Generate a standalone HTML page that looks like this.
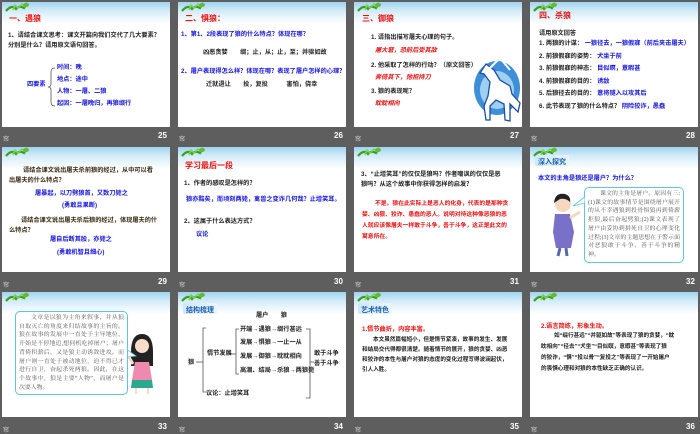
<!DOCTYPE html>
<html><head><meta charset="utf-8">
<style>
*{margin:0;padding:0;box-sizing:border-box}
body{width:700px;height:433px;background:#5e5e5e;position:relative;overflow:hidden;font-family:"Liberation Sans","Noto Sans CJK SC",sans-serif;}
.s{position:absolute;width:168px;height:125px;background:linear-gradient(#9fd3f0 0px,#d4ecf8 9px,#fff 22px,#fff 100%);}
.t{position:absolute;white-space:nowrap;font-size:6.2px;font-weight:bold;color:#222;line-height:1}
.r{color:#f01010}.b{color:#1515e0}.br{color:#3a2a10}
.h{font-size:8px;color:#f01010;font-weight:bold}
.f{position:absolute;color:#fff;font-size:8px;font-weight:bold}
.fi{position:absolute;color:#ddd;font-size:6px}
.tag{position:absolute;width:34px;height:11px;background:linear-gradient(90deg,#cfe7f7,#eaf5fc);border-radius:2px;color:#1a5fb0;font-size:7px;font-weight:bold;padding:2px 0 0 3px;white-space:nowrap}
.box{position:absolute;border:1px solid #5cc6e6;border-radius:5px;background:#fff;font-family:"Liberation Serif","Noto Serif CJK SC",serif;color:#555;font-size:5.9px;line-height:8.7px;padding:2px 3px;text-align:justify;overflow:hidden}
.sm{font-size:5.6px}
</style></head><body>

<div class="s" style="left:2px;top:2px"></div>
<div class="s" style="left:178px;top:2px"></div>
<div class="s" style="left:354px;top:2px"></div>
<div class="s" style="left:530px;top:2px"></div>
<div class="s" style="left:2px;top:147px"></div>
<div class="s" style="left:178px;top:147px"></div>
<div class="s" style="left:354px;top:147px"></div>
<div class="s" style="left:530px;top:147px"></div>
<div class="s" style="left:2px;top:292px"></div>
<div class="s" style="left:178px;top:292px"></div>
<div class="s" style="left:354px;top:292px"></div>
<div class="s" style="left:530px;top:292px"></div>

<svg width="700" height="433" style="position:absolute;left:0;top:0">
<defs><g id="v"><path d="M2 9 Q8 2 12 7 Q15 3 20 6 L23 1" stroke="#3aa020" stroke-width="2.2" fill="none"/><path d="M9 8 L11 3 L14 6 L18 2 L21 5" stroke="#7ed050" stroke-width="1.5" fill="none"/><ellipse cx="22" cy="3" rx="3" ry="2" fill="#5ebd2c"/></g></defs>
<use href="#v" x="4" y="2"/><use href="#v" x="180" y="2"/><use href="#v" x="356" y="2"/><use href="#v" x="532" y="2"/>
<use href="#v" x="4" y="147"/><use href="#v" x="180" y="147"/><use href="#v" x="356" y="147"/><use href="#v" x="532" y="147"/>
<use href="#v" x="4" y="292"/><use href="#v" x="180" y="292"/><use href="#v" x="356" y="292"/><use href="#v" x="532" y="292"/>
<path d="M55 68 Q51 68 51 72 L51 84 Q51 87 48 87 Q51 87 51 90 L51 102 Q51 106 55 106" stroke="#555" fill="none" stroke-width="0.8"/>
<ellipse cx="497" cy="88" rx="23" ry="27" fill="#3f8fd8"/>
<ellipse cx="497" cy="90" rx="17" ry="19" fill="#9fd0f2"/>
<path d="M486 64 L480 73 L484 74 L490 82 L488 96 L484 106 L486 120 L490 120 L490 106 L496 100 L504 104 L505 120 L510 121 L510 104 L518 112 L520 103 L512 94 L510 86 L500 80 L494 70 Z" fill="#fff" stroke="#1a4fa8" stroke-width="1.3"/>
<path d="M490 68 L500 58 L510 70" stroke="#fff" stroke-width="2" fill="none"/>
<circle cx="563" cy="204" r="8" fill="#f6d8c0"/>
<path d="M554 203 Q555 192 565 194 Q571 196 570 202 Q566 198 560 199 Z" fill="#222"/>
<path d="M555 214 L570 214 L574 232 L571 248 L556 248 L553 232 Z" fill="#7b70c8"/>
<path d="M560 248 L558 256 M566 248 L567 256" stroke="#5668b0" stroke-width="3"/>
<path d="M570 218 L580 212" stroke="#f6d8c0" stroke-width="3"/>
<path d="M131 352 Q131 334 142 334 Q153 334 153 352 L153 366 L131 366 Z" fill="#222"/>
<circle cx="142" cy="346" r="7" fill="#f8dcc8"/>
<path d="M135 362 L149 362 L152 380 L132 380 Z" fill="#ee8ab0"/>
<path d="M132 380 L152 380 L153 388 L131 388 Z" fill="#2aa890"/>
<path d="M136 388 L136 394 M148 388 L148 394" stroke="#f8dcc8" stroke-width="2"/>
<path d="M133 364 L126 352" stroke="#f8dcc8" stroke-width="3"/>
<g stroke="#555" fill="none" stroke-width="0.8">
<path d="M206 328 L203 328 L203 392 L206 392"/>
<path d="M196 362 L203 362"/>
<path d="M229 354 L236 354"/>
<path d="M239 329 L236 329 L236 374 L239 374"/>
<path d="M306 329 L310 329 L310 398 L306 398"/>
<path d="M310 362 L314 362"/>
</g>
</svg>

<div class="fi" style="left:3px;top:134px">帘</div><div class="f" style="left:158px;top:131px">25</div>
<div class="fi" style="left:179px;top:134px">帘</div><div class="f" style="left:334px;top:131px">26</div>
<div class="fi" style="left:355px;top:134px">帘</div><div class="f" style="left:510px;top:131px">27</div>
<div class="fi" style="left:531px;top:134px">帘</div><div class="f" style="left:686px;top:131px">28</div>
<div class="fi" style="left:3px;top:280px">帘</div><div class="f" style="left:158px;top:277px">29</div>
<div class="fi" style="left:179px;top:280px">帘</div><div class="f" style="left:334px;top:277px">30</div>
<div class="fi" style="left:355px;top:280px">帘</div><div class="f" style="left:510px;top:277px">31</div>
<div class="fi" style="left:531px;top:280px">帘</div><div class="f" style="left:686px;top:277px">32</div>
<div class="fi" style="left:3px;top:425px">帘</div><div class="f" style="left:158px;top:422px">33</div>
<div class="fi" style="left:179px;top:425px">帘</div><div class="f" style="left:334px;top:422px">34</div>
<div class="fi" style="left:355px;top:425px">帘</div><div class="f" style="left:510px;top:422px">35</div>
<div class="fi" style="left:531px;top:425px">帘</div><div class="f" style="left:686px;top:422px">36</div>

<div class="t h" style="left:9px;top:15px">一、遇狼</div>
<div class="t" style="left:8px;top:33px">1、请结合课文思考：课文开篇向我们交代了几大要素？</div>
<div class="t" style="left:8px;top:43px">分别是什么？请用原文语句回答。</div>
<div class="t b" style="left:27px;top:82px">四要素</div>
<div class="t b" style="left:57px;top:65px">时间：晚</div>
<div class="t b" style="left:57px;top:77px">地点：途中</div>
<div class="t b" style="left:57px;top:89px">人物：一屠、二狼</div>
<div class="t b" style="left:57px;top:101px">起因：一屠晚归，再狼缀行</div>

<div class="t h" style="left:185px;top:15px">二、惧狼：</div>
<div class="t b" style="left:181px;top:32px">1、第1、2段表现了狼的什么特点？体现在哪？</div>
<div class="t" style="left:203px;top:50px">凶恶贪婪　　缀；止，从；止，至；并驱如故</div>
<div class="t b" style="left:181px;top:69px">2、屠户表现得怎么样？体现在哪？表现了屠户怎样的心理？</div>
<div class="t" style="left:206px;top:82px">迁就退让　　投，复投　　　害怕，侥幸</div>

<div class="t h" style="left:362px;top:15px">三、御狼</div>
<div class="t" style="left:371px;top:35px">1. 请指出描写屠夫心理的句子。</div>
<div class="t r" style="left:375px;top:48px;font-style:italic">屠大窘，恐前后受其敌</div>
<div class="t" style="left:371px;top:63px">2. 他采取了怎样的行动？（原文回答）</div>
<div class="t r" style="left:375px;top:75px;font-style:italic">奔倚其下，弛担持刀</div>
<div class="t" style="left:371px;top:89px">3. 狼的表现呢？</div>
<div class="t r" style="left:375px;top:101px;font-style:italic">眈眈相向</div>

<div class="t h" style="left:539px;top:12px">四、杀狼</div>
<div class="t" style="left:539px;top:31px">请用原文回答</div>
<div class="t" style="left:539px;top:41px">1. 两狼的计谋：<span class="b">&nbsp;一狼径去，一狼假寐（前后夹击屠夫）</span></div>
<div class="t" style="left:539px;top:54px">2. 前狼假寐的姿势：<span class="b">&nbsp;犬坐于前</span></div>
<div class="t" style="left:539px;top:66px">3. 前狼假寐的神态：<span class="b">&nbsp;目似瞑，意暇甚</span></div>
<div class="t" style="left:539px;top:79px">4. 前狼假寐的目的：<span class="b">&nbsp;诱敌</span></div>
<div class="t" style="left:539px;top:91px">5. 后狼径去的目的：<span class="b">&nbsp;意将隧入以攻其后</span></div>
<div class="t" style="left:539px;top:104px">6. 此节表现了狼的什么特点？<span class="b">&nbsp;阴险狡诈，愚蠢</span></div>

<div class="t br" style="left:23px;top:168px">请结合课文说出屠夫杀前狼的经过，从中可以看</div>
<div class="t br" style="left:9px;top:178px">出屠夫的什么特点？</div>
<div class="t b" style="left:35px;top:191px">屠暴起，以刀劈狼首，又数刀毙之</div>
<div class="t b" style="left:62px;top:203px">(勇敢且果断)</div>
<div class="t br" style="left:21px;top:218px">请结合课文说出屠夫杀后狼的经过，体现屠夫的什</div>
<div class="t br" style="left:9px;top:228px">么特点？</div>
<div class="t b" style="left:50px;top:237px">屠自后断其股，亦毙之</div>
<div class="t b" style="left:57px;top:250px">(勇敢机智且细心)</div>

<div class="t h" style="left:185px;top:162px">学习最后一段</div>
<div class="t" style="left:184px;top:181px">1、作者的感叹是怎样的？</div>
<div class="t b" style="left:186px;top:197px">狼亦黠矣，而顷刻两毙，禽兽之变诈几何哉？止增笑耳。</div>
<div class="t" style="left:184px;top:219px">2、这属于什么表达方式？</div>
<div class="t b" style="left:196px;top:232px">议论</div>

<div class="t" style="left:361px;top:172px">3、“止增笑耳”的仅仅是狼吗？作者嘲讽的仅仅是恶</div>
<div class="t" style="left:361px;top:182px">狼吗？从这个故事中你获得怎样的启发？</div>
<div class="t r" style="left:375px;top:202px;font-size:5.8px">不是。狼在此实际上是恶人的化身，代表的是那种贪</div>
<div class="t r" style="left:362px;top:213px;font-size:5.8px">婪、凶狠、狡诈、愚蠢的恶人。说明对待这种像恶狼的恶</div>
<div class="t r" style="left:362px;top:224px;font-size:5.8px">人就应该像屠夫一样敢于斗争，善于斗争，这正是此文的</div>
<div class="t r" style="left:362px;top:235px;font-size:5.8px">寓意所在。</div>

<div class="tag" style="left:535px;top:155px">深入探究</div>
<div class="t b" style="left:538px;top:176px">本文的主角是狼还是屠户？为什么？</div>
<div class="box" style="left:584px;top:187px;width:100px;height:76px;text-indent:12px">课文的主角是屠户。原因有三:(1)课文的故事情节是围绕屠户展开的从不幸遇狼到投骨惧狼再到倚薪拒狼,最后奋起劈狼;(2)课文表现了屠户由妥协到拼死自卫的心理变化过程;(3)文章的主题思想在于警示面对恶狼敢于斗争、善于斗争的精神。</div>
<svg width="700" height="433" style="position:absolute;left:0;top:0"><path d="M584.5 197 L573 206 L584.5 203" fill="#fff" stroke="#5cc6e6" stroke-width="0.8"/><path d="M127.5 350 L136 356 L127.5 357" fill="#fff" stroke="#5cc6e6" stroke-width="0.8"/></svg>

<div class="box" style="left:15px;top:311px;width:113px;height:84px;text-indent:12px">文章是以狼为主角来叙事，并从狼自取灭亡的角度来归结故事的主旨的。狼在故事的发展中一直处于主导地位，开始是不停地追,想伺机吃掉屠户；屠户背倚积薪后，又是狼主动诱敌进攻。而屠户则一直处于被动地位，迫不得已才进行自卫，奋起杀死两狼。因此，在这个故事中，狼是主要“人物”，而屠户是次要人物。</div>

<div class="tag" style="left:183px;top:303px">结构梳理</div>
<div class="t" style="left:256px;top:313px">屠户　　狼</div>
<div class="t" style="left:188px;top:360px">狼</div>
<div class="t" style="left:207px;top:351px">情节发展</div>
<div class="t" style="left:240px;top:327px">开端→遇狼→缀行甚远</div>
<div class="t" style="left:240px;top:340px">发展→惧狼→一止一从</div>
<div class="t" style="left:240px;top:354px">发展→御狼→眈眈相向</div>
<div class="t" style="left:240px;top:368px">高潮、结局→杀狼→两狼毙</div>
<div class="t" style="left:206px;top:391px">议论：止增笑耳</div>
<div class="t" style="left:314px;top:351px">敢于斗争</div>
<div class="t" style="left:314px;top:361px">善于斗争</div>

<div class="tag" style="left:358px;top:303px">艺术特色</div>
<div class="t r" style="left:362px;top:327px">1.情节曲折，内容丰富。</div>
<div class="t sm" style="left:373px;top:338px">本文虽然篇幅短小，但是情节紧凑，故事的发生、发展</div>
<div class="t sm" style="left:362px;top:348px">和结局交代得都很清楚。随着情节的展开，狼的贪婪、凶恶</div>
<div class="t sm" style="left:362px;top:358px">和狡诈的本性与屠户对狼的态度的变化过程写得波澜起伏，</div>
<div class="t sm" style="left:362px;top:368px">引人入胜。</div>

<div class="t r" style="left:541px;top:324px">2.语言简练，形象生动。</div>
<div class="t sm" style="left:554px;top:334px">如“缀行甚远”“并驱如故”等表现了狼的贪婪，“眈</div>
<div class="t sm" style="left:541px;top:345px">眈相向”“径去”“犬坐”“目似瞑，意暇甚”等表现了狼</div>
<div class="t sm" style="left:541px;top:356px">的狡诈，“惧”“投以骨”“复投之”等表现了一开始屠户</div>
<div class="t sm" style="left:541px;top:367px">的畏惧心理和对狼的本性缺乏正确的认识。</div>

</body></html>
